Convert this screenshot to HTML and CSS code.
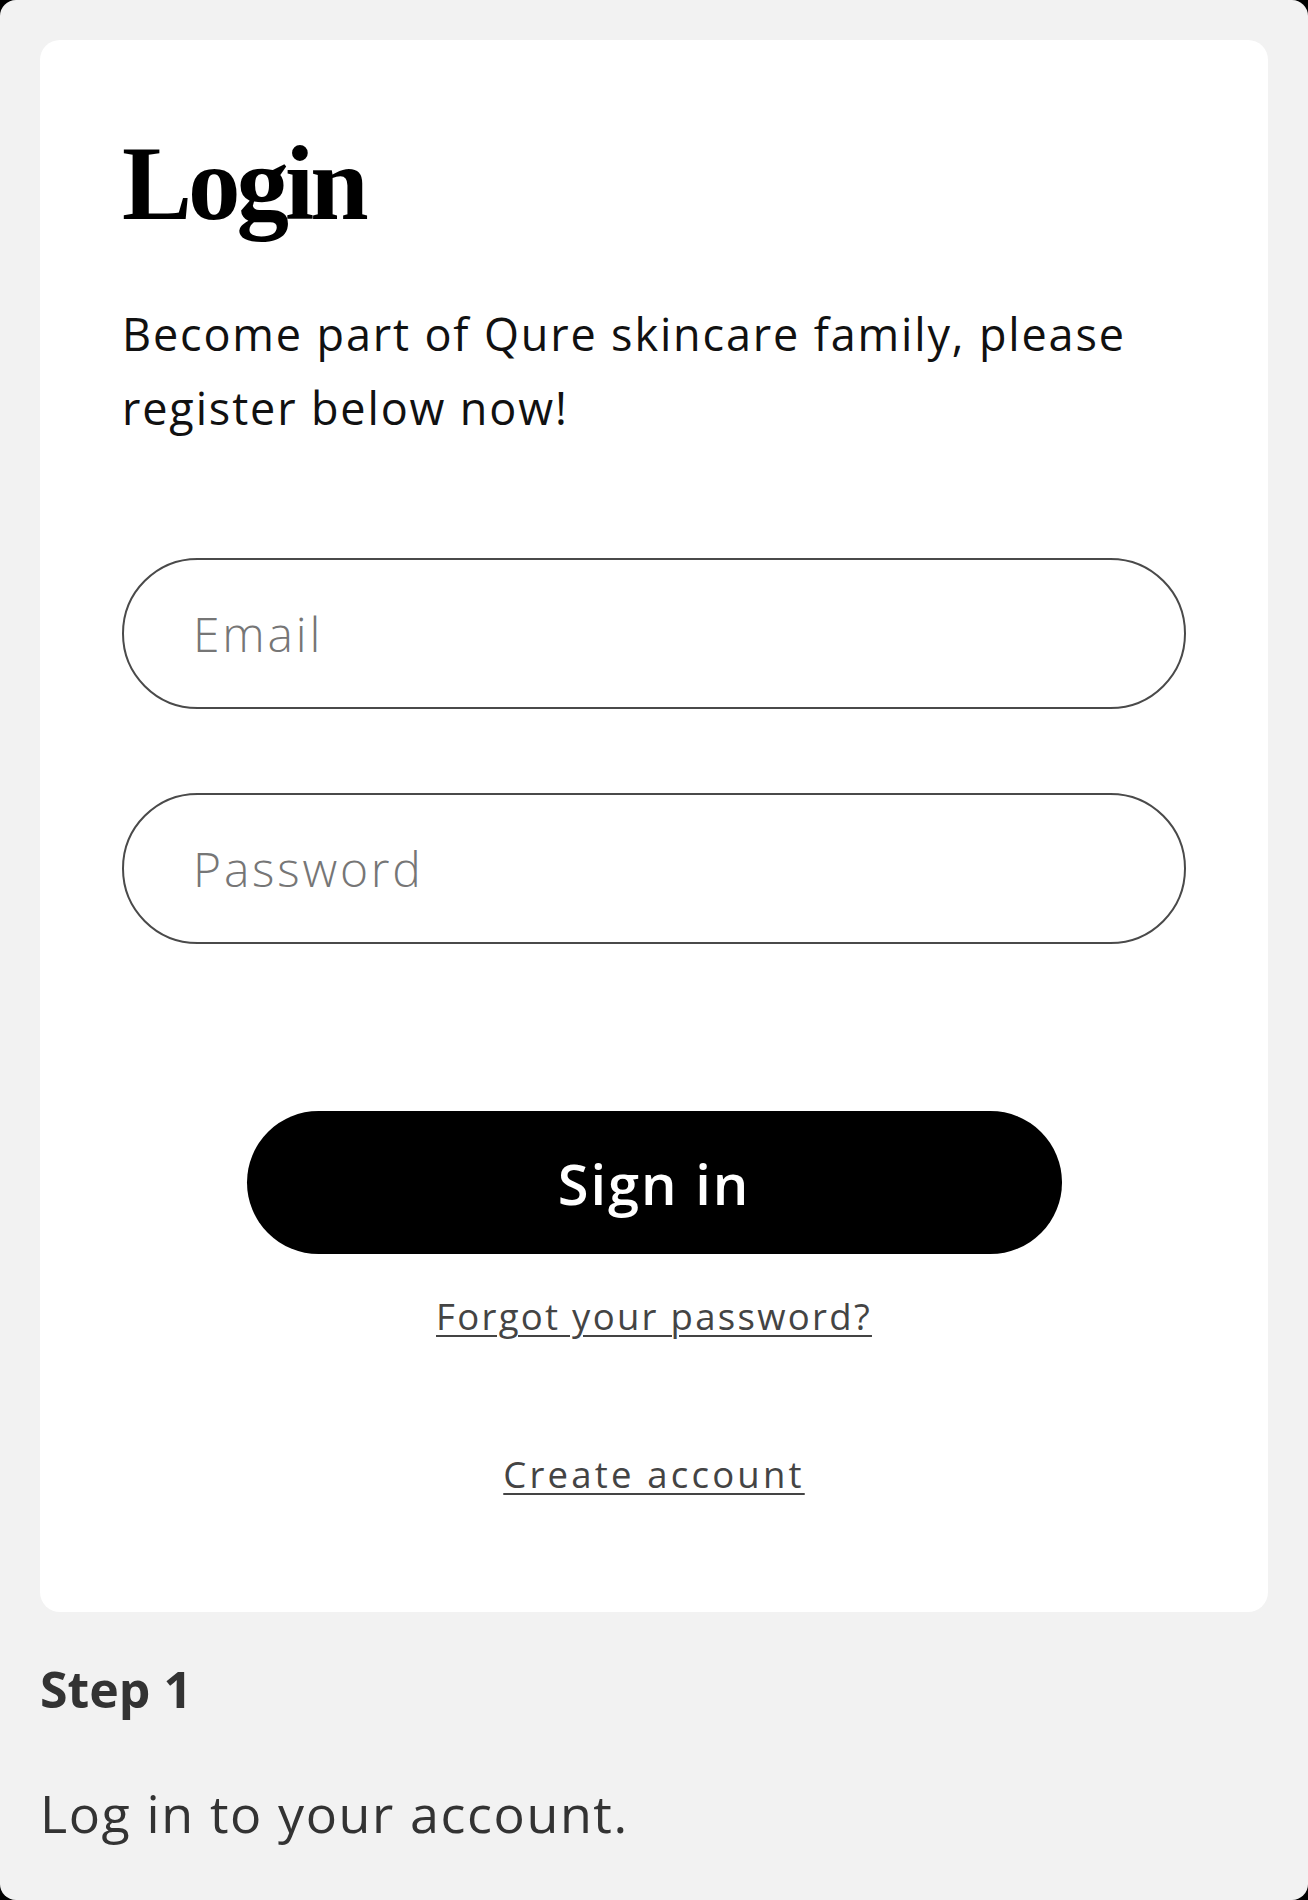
FILE: index.html
```html
<!DOCTYPE html>
<html lang="en">
<head>
<meta charset="utf-8">
<title>Login</title>
<link rel="stylesheet" href="styles.css">
</head>
<body>
<main class="page">
  <section class="card">
    <h1 class="title">Login</h1>
    <p class="intro">Become part of Qure skincare family, please register below now!</p>
    <form class="form">
      <input class="field" type="email" placeholder="Email">
      <input class="field" type="password" placeholder="Password">
      <button class="submit" type="button">Sign in</button>
      <a class="link link-forgot" href="#">Forgot your password?</a>
      <a class="link link-create" href="#">Create account</a>
    </form>
  </section>
  <h2 class="step">Step 1</h2>
  <p class="step-text">Log in to your account.</p>
</main>
</body>
</html>
```

FILE: styles.css
```css
html {
  background: #000;
  margin: 0;
  padding: 0;
}

body {
  margin: 0;
  min-height: 1900px;
  background: #f2f2f2;
  border-radius: 16px;
  font-family: "Open Sans", "Noto Sans", sans-serif;
}

.page {
  padding: 40px 40px 0;
  display: flex;
  flex-direction: column;
}

.card {
  background: #fff;
  border-radius: 20px;
  padding: 90px 82px 113px;
  display: flex;
  flex-direction: column;
}

.title {
  margin: 0;
  font-family: "Liberation Serif", "Times New Roman", serif;
  font-weight: 700;
  font-size: 105px;
  line-height: 108px;
  letter-spacing: -4px;
  color: #000;
}

.intro {
  margin: 59px 0 0;
  font-size: 45px;
  line-height: 74px;
  letter-spacing: 1.85px;
  color: #111;
}

.form {
  margin-top: 113px;
  display: flex;
  flex-direction: column;
  align-items: center;
}

.field {
  box-sizing: border-box;
  width: 100%;
  height: 151px;
  border: 2.5px solid #4a4a4a;
  border-radius: 76px;
  padding: 0 0 0 69px;
  font-family: "Open Sans", "Noto Sans", sans-serif;
  font-weight: 300;
  font-size: 48px;
  letter-spacing: 2.8px;
  color: #222;
  background: #fff;
  outline: none;
}

.field + .field {
  margin-top: 84px;
}

.field::placeholder {
  color: #767676;
  opacity: 1;
}

.submit {
  margin-top: 167px;
  width: 815px;
  height: 143px;
  border: none;
  border-radius: 72px;
  background: #000;
  color: #fff;
  font-family: "Open Sans", "Noto Sans", sans-serif;
  font-weight: 600;
  font-size: 56px;
  letter-spacing: 2px;
  cursor: pointer;
}

.link {
  font-size: 36.5px;
  line-height: 50px;
  letter-spacing: 2.5px;
  color: #444;
  text-decoration: underline;
  text-decoration-thickness: 2px;
  text-underline-offset: 5px;
}

.link-forgot {
  margin-top: 37px;
  letter-spacing: 2.3px;
}

.link-create {
  margin-top: 108px;
  letter-spacing: 3.2px;
}

.step {
  margin: 47px 0 0;
  font-size: 50px;
  line-height: 60px;
  font-weight: 700;
  color: #333;
}

.step-text {
  margin: 59px 0 0;
  font-size: 52px;
  line-height: 70px;
  letter-spacing: 1.6px;
  color: #333;
}
```
